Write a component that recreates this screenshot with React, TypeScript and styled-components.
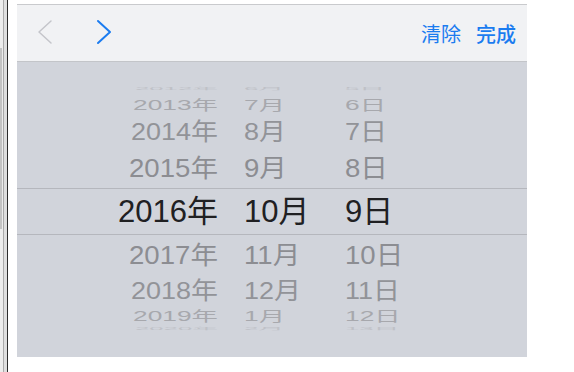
import React from "react";
import styled, { createGlobalStyle } from "styled-components";

const Global = createGlobalStyle`
  html, body { margin: 0; padding: 0; background: #ffffff; }
  body { font-family: "Liberation Sans", "Noto Sans CJK SC", sans-serif; }
`;

const Page = styled.div`
  display: flex;
  width: 574px;
  height: 372px;
  background: #ffffff;
  overflow: hidden;
`;

const Gutter = styled.div`
  display: flex;
  height: 372px;
  width: 17px;
  flex: none;
`;

const Track = styled.div`
  width: 3px;
  background: #ececec;
  display: flex;
  flex-direction: column;
`;

const Thumb = styled.div`
  margin-top: 48px;
  width: 2px;
  height: 181px;
  background: #c3c3c3;
`;

const Rule = styled.div<{ $w: number; $c: string }>`
  width: ${(p) => p.$w}px;
  background: ${(p) => p.$c};
`;

const Panel = styled.div`
  margin-top: 4px;
  width: 510px;
  height: 353px;
  display: flex;
  flex-direction: column;
  flex: none;
`;

const Toolbar = styled.div`
  height: 56px;
  border-top: 1px solid #c9cacd;
  border-bottom: 1px solid #c3c5c9;
  background: #f1f2f4;
  display: flex;
  align-items: center;
  padding: 0 11px 0 20px;
`;

const NavButton = styled.button`
  border: 0;
  background: none;
  padding: 0;
  margin: 0 43px 2px 0;
  width: 16px;
  height: 26px;
  display: flex;
  align-items: center;
  justify-content: center;
`;

const Actions = styled.div`
  margin-left: auto;
  display: flex;
  gap: 15px;
  padding-top: 2px;
`;

const Action = styled.span<{ $strong?: boolean }>`
  font-family: "Noto Sans CJK SC", sans-serif;
  font-size: 20px;
  font-weight: ${(p) => (p.$strong ? 500 : 400)};
  color: #1b7cf0;
  line-height: 1;
`;

const Picker = styled.div`
  flex: 1;
  background: #d1d4db;
  display: flex;
  flex-direction: column;
  padding-top: 20px;
  overflow: hidden;
`;

const Row = styled.div<{ $h: number; $band?: boolean }>`
  height: ${(p) => p.$h}px;
  flex: none;
  display: grid;
  grid-template-columns: 201px 75px 1fr;
  column-gap: 26px;
  align-items: center;
  box-sizing: border-box;
  border-top: ${(p) => (p.$band ? "1px solid #b5b7bd" : "none")};
  border-bottom: ${(p) => (p.$band ? "1px solid #b5b7bd" : "none")};
`;

const Cell = styled.span<{
  $align: "start" | "end";
  $sx: number;
  $sy: number;
  $color: string;
}>`
  justify-self: ${(p) => p.$align};
  font-size: 31px;
  line-height: ${(p) => Math.max(4, Math.round(31 * p.$sy))}px;
  height: ${(p) => Math.max(4, Math.round(31 * p.$sy))}px;
  display: flex;
  align-items: center;
  white-space: nowrap;
  color: ${(p) => p.$color};
  transform: scale(${(p) => p.$sx}, ${(p) => p.$sy});
  transform-origin: ${(p) => (p.$align === "end" ? "right center" : "left center")};
`;

type Item = { y: number; m: number; d: number; off: number; h: number };

const items: Item[] = [
  { y: 2012, m: 6, d: 5, off: -4, h: 14 },
  { y: 2013, m: 7, d: 6, off: -3, h: 20 },
  { y: 2014, m: 8, d: 7, off: -2, h: 32 },
  { y: 2015, m: 9, d: 8, off: -1, h: 40 },
  { y: 2016, m: 10, d: 9, off: 0, h: 47 },
  { y: 2017, m: 11, d: 10, off: 1, h: 40 },
  { y: 2018, m: 12, d: 11, off: 2, h: 32 },
  { y: 2019, m: 1, d: 12, off: 3, h: 18 },
  { y: 2020, m: 2, d: 13, off: 4, h: 8 },
];

const look: Record<number, { sx: number; sy: number; c: string }> = {
  0: { sx: 1, sy: 1, c: "#202022" },
  1: { sx: 0.89, sy: 0.82, c: "#8c8d92" },
  2: { sx: 0.87, sy: 0.78, c: "#929398" },
  3: { sx: 0.85, sy: 0.45, c: "#a7a8ad" },
  4: { sx: 0.83, sy: 0.12, c: "#bfc1c7" },
};

const Chevron = ({ dir, color, width }: { dir: "left" | "right"; color: string; width: number }) => (
  <svg width="16" height="26" viewBox="0 0 16 26">
    <polyline
      points={dir === "left" ? "14,2 2,13 14,24" : "2,2 14,13 2,24"}
      fill="none"
      stroke={color}
      strokeWidth={width}
      strokeLinecap="round"
      strokeLinejoin="round"
    />
  </svg>
);

export default function App() {
  return (
    <>
      <Global />
      <Page>
        <Gutter>
          <Track>
            <Thumb />
          </Track>
          <Rule $w={1} $c="#a9a9a9" />
          <Rule $w={3} $c="#dedede" />
          <Rule $w={1} $c="#2b2b2b" />
          <Rule $w={9} $c="#ffffff" />
        </Gutter>
        <Panel>
          <Toolbar>
            <NavButton aria-label="上一个">
              <Chevron dir="left" color="#c4c5ca" width={1.5} />
            </NavButton>
            <NavButton aria-label="下一个">
              <Chevron dir="right" color="#1b7cf0" width={2} />
            </NavButton>
            <Actions>
              <Action>清除</Action>
              <Action $strong>完成</Action>
            </Actions>
          </Toolbar>
          <Picker>
            {items.map((it) => {
              const l = look[Math.abs(it.off)];
              return (
                <Row key={it.y} $h={it.h} $band={it.off === 0}>
                  <Cell $align="end" $sx={l.sx} $sy={l.sy} $color={l.c}>
                    {it.y}年
                  </Cell>
                  <Cell $align="start" $sx={l.sx} $sy={l.sy} $color={l.c}>
                    {it.m}月
                  </Cell>
                  <Cell $align="start" $sx={l.sx} $sy={l.sy} $color={l.c}>
                    {it.d}日
                  </Cell>
                </Row>
              );
            })}
          </Picker>
        </Panel>
      </Page>
    </>
  );
}
